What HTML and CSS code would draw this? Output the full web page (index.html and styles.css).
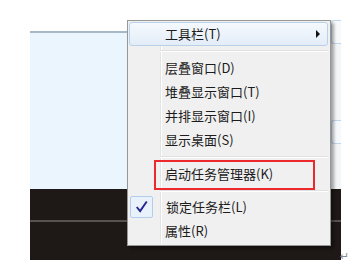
FILE: index.html
```html
<!DOCTYPE html>
<html lang="zh-CN">
<head>
  <meta charset="UTF-8">
  <meta name="viewport" content="width=device-width, initial-scale=1.0">
  <title>任务栏菜单</title>
  <link rel="stylesheet" href="styles.css">
</head>
<body>
  <div class="desk">
    <div class="win"></div>
    <div class="bar">
      <div class="bar-top"></div>
    </div>

    <div class="side">
      <div class="side-btn"></div>
      <div class="side-btn low"></div>
    </div>

    <div class="menu">
      <div class="item hot">
        <span class="ico"></span>
        <span class="txt">工具栏(T)</span>
        <span class="arrow"></span>
      </div>
      <div class="sep"></div>
      <div class="item"><span class="ico"></span><span class="txt">层叠窗口(D)</span></div>
      <div class="item"><span class="ico"></span><span class="txt">堆叠显示窗口(T)</span></div>
      <div class="item"><span class="ico"></span><span class="txt">并排显示窗口(I)</span></div>
      <div class="item"><span class="ico"></span><span class="txt">显示桌面(S)</span></div>
      <div class="sep"></div>
      <div class="item">
        <span class="ico"></span><span class="txt">启动任务管理器(K)</span>
        <span class="mark"></span>
      </div>
      <div class="sep short"></div>
      <div class="item">
        <span class="ico checked">
          <svg width="23" height="22" viewBox="0 0 23 22"><path d="M6 11.5 L7.5 10.5 L10 13.5 L16 5 L17.5 6 L10.2 16.8 Z" fill="#25258f"/></svg>
        </span>
        <span class="txt">锁定任务栏(L)</span>
      </div>
      <div class="item"><span class="ico"></span><span class="txt">属性(R)</span></div>
    </div>

    <span class="ret">↵</span>
  </div>
</body>
</html>
```

FILE: styles.css
```css
body { margin: 0; background: #fff; font-family: "Noto Sans CJK SC", "Liberation Sans", sans-serif; }

.desk { position: relative; margin: 31px 0 0 30px; width: 311px; }
.win { height: 156px; background: #eaf5fd; border-top: 2px solid #a7b8c6; }
.bar { height: 71px; background: #1e1917; }
.bar-top { height: 31px; border-bottom: 2px solid #55524f; }

.side { position: absolute; left: 301px; top: -11px; width: 10px; height: 169px; background: #f3f5f7; }
.side-btn { margin-top: 0; height: 22px; border: 1px solid #c4d6ec; border-right: 0; border-radius: 3px 0 0 3px; background: #f7fafd; }
.side-btn.low { margin-top: 76px; }

.menu {
  position: absolute; left: 97px; top: -11px; width: 199px;
  background: #f0f0f0; border: 1px solid #979797;
  padding: 1px 2px 2px 1px;
  box-shadow: 3px 3px 3px rgba(0, 0, 0, 0.35);
}
.menu::before {
  content: ""; position: absolute; left: 32px; top: 2px; bottom: 2px;
  width: 1px; background: #e2e3e3; border-right: 1px solid #fff;
}

.item { position: relative; display: flex; align-items: center; height: 24px; font-size: 13px; color: #1c1c1c; }
.item.hot {
  background: linear-gradient(#f5f9fd, #e3edf8);
  border: 1px solid #b9d0ea; border-radius: 3px;
  height: 22px; margin-bottom: 0;
}
.item.hot .ico { margin-left: 0; }
.ico { width: 23px; height: 22px; margin: 0 12px 0 1px; flex: none; }
.ico.checked { border: 1px solid #b3cdec; border-radius: 2px; background: #e9f1fb; width: 21px; height: 20px; margin-right: 13px; }
.ico svg { display: block; margin: -1px; }
.txt { line-height: 24px; }
.arrow {
  margin-left: auto; margin-right: 7px;
  border-left: 4px solid #111; border-top: 4px solid transparent; border-bottom: 4px solid transparent;
}

.sep { height: 10px; margin-left: 31px; position: relative; z-index: 1; }
.sep::after {
  content: ""; display: block; position: relative; top: 4px;
  height: 1px; background: #e0e0e0; border-bottom: 1px solid #fff;
}
.sep.short { height: 9px; }

.mark {
  position: absolute; left: 25px; top: -2px; width: 157px; height: 26px;
  border: 2px solid #ec2a2e;
}

.ret { position: absolute; left: 310px; top: 219px; font-size: 11px; color: #8a8a8a; font-family: "DejaVu Sans", sans-serif; }
```
